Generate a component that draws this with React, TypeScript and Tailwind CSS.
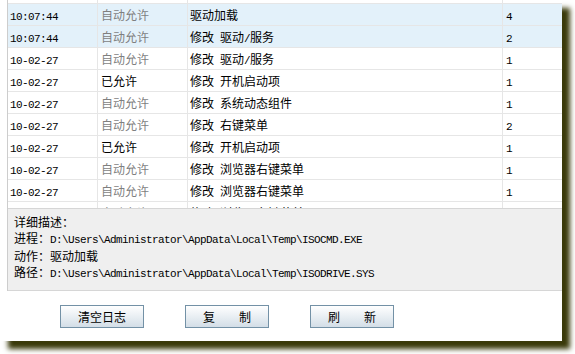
const cjk = { fontFamily: '"Noto Sans CJK SC", "Noto Sans", sans-serif' };

// ASCII runs in a fixed 6px mono, everything else in the CJK face
const Mixed = ({ text }: { text: string }) => {
    const parts = text.match(/[\x20-\x7e]+|[^\x20-\x7e]+/g) ?? [];
    return (
        <>
            {parts.map((p, i) =>
                /^[\x20-\x7e]+$/.test(p) ? (
                    <span key={i} className="font-['Liberation_Mono',monospace] text-[11px] tracking-[-0.6px] whitespace-pre">
                        {p}
                    </span>
                ) : (
                    <span key={i}>{p}</span>
                )
            )}
        </>
    );
};

const rows = [
    { time: "10:07:44", status: "自动允许", action: "驱动加载", count: "4", hi: true },
    { time: "10:07:44", status: "自动允许", action: "修改 驱动/服务", count: "2", hi: true },
    { time: "10-02-27", status: "自动允许", action: "修改 驱动/服务", count: "1" },
    { time: "10-02-27", status: "已允许", action: "修改 开机启动项", count: "1" },
    { time: "10-02-27", status: "自动允许", action: "修改 系统动态组件", count: "1" },
    { time: "10-02-27", status: "自动允许", action: "修改 右键菜单", count: "2" },
    { time: "10-02-27", status: "已允许", action: "修改 开机启动项", count: "1" },
    { time: "10-02-27", status: "自动允许", action: "修改 浏览器右键菜单", count: "1" },
    { time: "10-02-27", status: "自动允许", action: "修改 浏览器右键菜单", count: "1" },
    { time: "10-02-27", status: "自动允许", action: "修改 浏览器右键菜单", count: "1" },
];

const Btn = ({ chars }: { chars: string[] }) => (
    <button className="w-[84px] h-[23px] border border-[#7391a6] bg-gradient-to-b from-white to-[#d3dee7] flex items-center justify-center gap-[24px] text-[12px] text-black leading-none">
        {chars.map((c) => (
            <span key={c}>{c}</span>
        ))}
    </button>
);

export default function App() {
    return (
        <div className="w-[575px] h-[354px] bg-white text-[12px] text-black" style={cjk}>
            <div className="w-[562px] h-[341px] bg-white shadow-[8px_8px_5px_#3a3a0a] flex flex-col">
                <div className="ml-[7px] border-l border-[#cdcdcd] flex flex-col">
                    {/* log list, scrolled so the header row is only a sliver */}
                    <div className="h-[208px] overflow-hidden flex flex-col">
                        <div className="h-[4px] shrink-0 border-b border-[#e6e6e6] flex">
                            <div className="w-[90px] border-r border-[#e6e6e6]"></div>
                            <div className="w-[90px] border-r border-[#e6e6e6]"></div>
                            <div className="w-[315px] border-r border-[#e6e6e6]"></div>
                        </div>
                        {rows.map((r, i) => (
                            <div
                                key={i}
                                className={`h-[22px] shrink-0 border-b border-[#e6e6e6] flex items-center leading-[21px] ${r.hi ? "bg-[#e3f1fa]" : ""}`}
                            >
                                <div className="w-[90px] h-full border-r border-[#e6e6e6] pl-[2px]">
                                    <Mixed text={r.time} />
                                </div>
                                <div className={`w-[90px] h-full border-r border-[#e6e6e6] pl-[3px] ${r.status === "已允许" ? "text-black" : "text-[#7f7f7f]"}`}>
                                    {r.status}
                                </div>
                                <div className="w-[315px] h-full border-r border-[#e6e6e6] pl-[2px] whitespace-nowrap">
                                    <Mixed text={r.action} />
                                </div>
                                <div className="flex-1 h-full pl-[3px]">
                                    <Mixed text={r.count} />
                                </div>
                            </div>
                        ))}
                    </div>

                    {/* detail box */}
                    <div className="h-[83px] bg-[#efefef] border-t border-b border-[#d6d6d6] pt-[5px] pl-[6px] leading-[16px] whitespace-nowrap">
                        <div>详细描述：</div>
                        <div>
                            进程：<Mixed text="D:\Users\Administrator\AppData\Local\Temp\ISOCMD.EXE" />
                        </div>
                        <div>动作：驱动加载</div>
                        <div>
                            路径：<Mixed text="D:\Users\Administrator\AppData\Local\Temp\ISODRIVE.SYS" />
                        </div>
                    </div>
                </div>

                <div className="flex pl-[60px] pt-[14px] gap-[41px]">
                    <Btn chars={["清空日志"]} />
                    <Btn chars={["复", "制"]} />
                    <Btn chars={["刷", "新"]} />
                </div>
            </div>
        </div>
    );
}
